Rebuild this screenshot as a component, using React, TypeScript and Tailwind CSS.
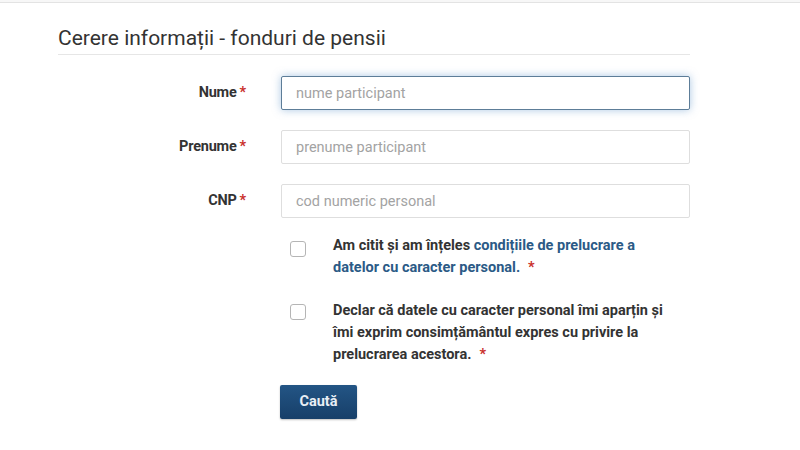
import React from "react";

const font = { fontFamily: "Roboto, 'Liberation Sans', sans-serif" };

function Req() {
  return <span className="text-[#c9302c] ml-[3px]">*</span>;
}

function Row({ label, placeholder, focused }: { label: string; placeholder: string; focused?: boolean }) {
  return (
    <div className="flex items-center">
      <label className="w-[188px] text-right text-[14.5px] font-bold text-[#333] tracking-[-0.2px]">
        {label}
        <Req />
      </label>
      <div className="ml-[35px] w-[409px]">
        <input
          placeholder={placeholder}
          className={
            "h-[34px] w-full rounded-[2px] border bg-white px-[14px] text-[14.5px] text-[#333] placeholder:text-[#a3a3a3] outline-none " +
            (focused
              ? "border-[#5d7d98] shadow-[0_0_8px_rgba(102,153,204,0.55)]"
              : "border-[#dedede]")
          }
        />
      </div>
    </div>
  );
}

function Check({ children, top }: { children: React.ReactNode; top: string }) {
  return (
    <div className="ml-[223px] flex w-[409px] items-start">
      <div className={"ml-[9px] h-[16px] w-[16px] shrink-0 rounded-[3px] border border-[#b5b5b5] bg-white " + top} />
      <div className="ml-[27px] w-[345px] text-[14.5px] font-bold leading-[22px] text-[#333]">{children}</div>
    </div>
  );
}

export default function App() {
  return (
    <div className="min-h-[450px] w-[800px] bg-white" style={font}>
      <div className="h-[3px] border-b border-[#e3e3e3] bg-[#f7f7f7]" />
      <div className="ml-[58px] w-[632px]">
        <h1 className="mt-[23px] border-b border-[#e6e6e6] pb-[3px] text-[21px] font-normal leading-[25px] text-[#333]">
          Cerere informații - fonduri de pensii
        </h1>
        <div className="mt-[21px] flex flex-col gap-[20px]">
          <Row label="Nume" placeholder="nume participant" focused />
          <Row label="Prenume" placeholder="prenume participant" />
          <Row label="CNP" placeholder="cod numeric personal" />
        </div>
        <div className="mt-[17px]">
          <Check top="mt-[6px]">
            Am citit și am înțeles{" "}
            <a className="text-[#2b5a86]">condițiile de prelucrare a datelor cu caracter personal.</a>
            <span className="ml-[8px] text-[#c9302c]">*</span>
          </Check>
        </div>
        <div className="mt-[21px]">
          <Check top="mt-[4px]">
            Declar că datele cu caracter personal îmi aparțin și îmi exprim consimțământul expres cu privire la
            prelucrarea acestora.<span className="ml-[8px] text-[#c9302c]">*</span>
          </Check>
        </div>
        <div className="ml-[222px] mt-[19px]">
          <button className="h-[34px] w-[77px] rounded-[2px] bg-gradient-to-b from-[#235585] to-[#173f69] text-[14.5px] font-bold text-[#e8eef5] shadow-[0_1px_2px_rgba(0,0,0,0.25)]">
            Caută
          </button>
        </div>
      </div>
    </div>
  );
}
